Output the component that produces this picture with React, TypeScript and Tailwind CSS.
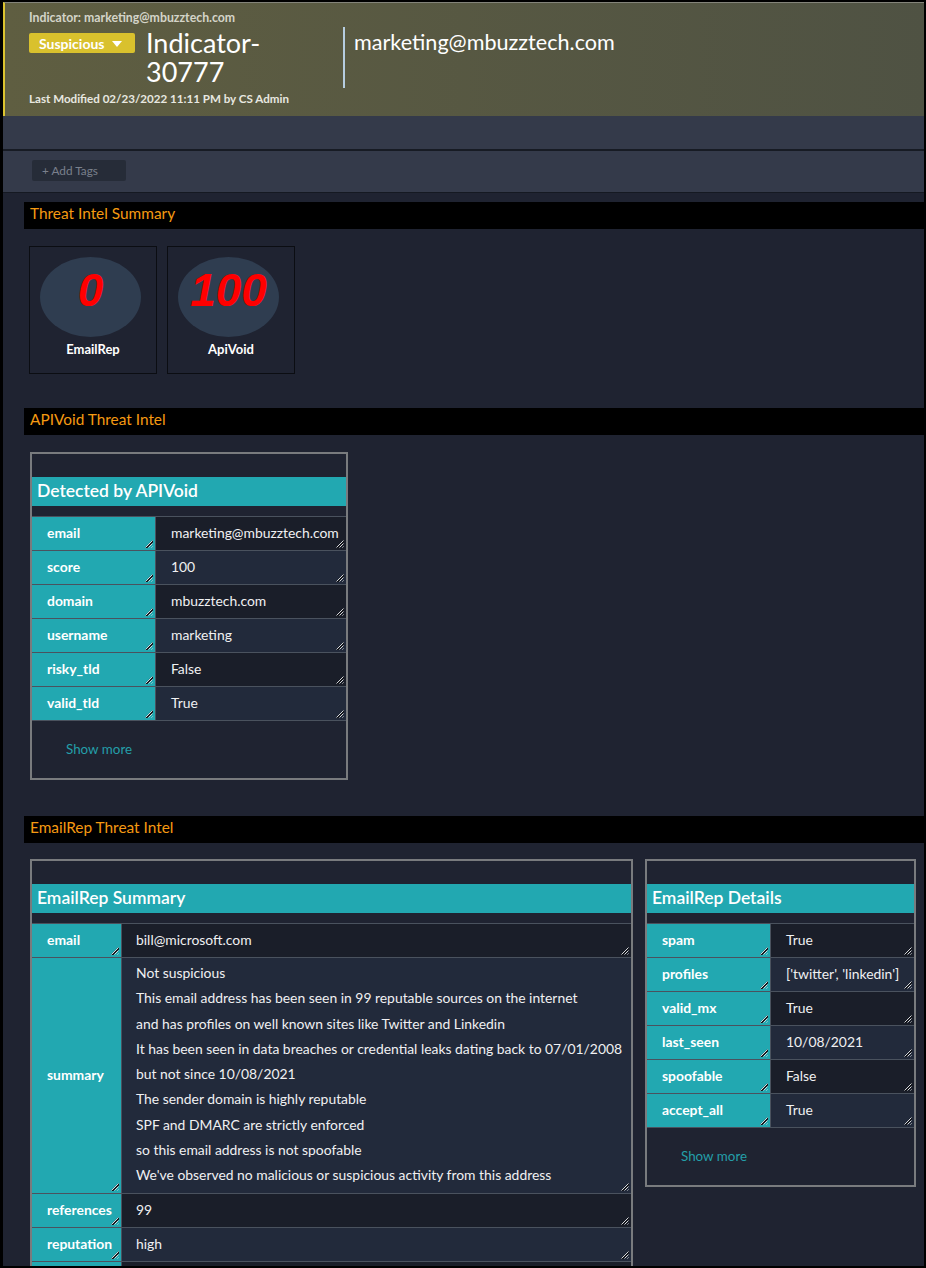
import React from "react";

const Handle = () => (
  <svg width="8" height="8" viewBox="0 0 8 8" className="absolute right-[2px] bottom-[2px]">
    <path d="M8 1 L1 8" stroke="#111318" strokeWidth="2" />
    <path d="M7.5 0.5 L0.5 7.5" stroke="#d6d8dc" strokeWidth="1" />
    <path d="M7.5 3.5 L3.5 7.5" stroke="#d6d8dc" strokeWidth="1" />
    <path d="M7.5 6.5 L6.5 7.5" stroke="#d6d8dc" strokeWidth="1" />
  </svg>
);

type RowProps = { k: string; v: string; dark: boolean; narrow?: boolean };

function Row({ k, v, dark, narrow }: RowProps) {
  return (
    <div className="flex border-b border-[#4a525e]">
      <div
        className={`relative flex items-center bg-[#22a8b1] border-r border-[#4a525e] font-bold text-[13.9px] text-white ${
          narrow ? "w-[90px] pl-[15px]" : "w-[124px] pl-[15px]"
        }`}
      >
        {k}
        <Handle />
      </div>
      <div
        className={`relative flex-1 h-[33px] flex items-center text-[13.9px] text-[#f0f0f2] whitespace-nowrap ${
          narrow ? "pl-[14px]" : "pl-[15px]"
        } ${dark ? "bg-[#1a1e29]" : "bg-[#222a3b]"}`}
      >
        {v}
        <Handle />
      </div>
    </div>
  );
}

function SectionBar({ title }: { title: string }) {
  return (
    <div className="h-[27px] bg-black flex items-center pl-[6px] pb-[3px] text-[15.4px] text-[#f59a12]">
      {title}
    </div>
  );
}

function ScoreCard({ n, label }: { n: string; label: string }) {
  return (
    <div className="w-[128px] h-[128px] border border-[#0b0d12] p-[10px] flex flex-col">
      <div className="w-[101px] h-[80px] rounded-[50%] bg-[#2f3d50] flex items-center justify-center">
        <span className="text-[#ff0000] italic font-bold text-[46px] leading-none font-['Liberation_Sans',sans-serif] -mt-[14px]">
          {n}
        </span>
      </div>
      <div className="self-center mt-[5px] text-[13px] font-bold text-white leading-[14px]">{label}</div>
    </div>
  );
}

function Panel({
  title,
  className,
  children,
}: {
  title: string;
  className: string;
  children: React.ReactNode;
}) {
  return (
    <div className={`border-2 border-[#797b7e] bg-[#1f2331] ${className}`}>
      <div className="h-[23px]" />
      <div className="h-[29px] bg-[#22a8b1] pl-[5px] flex items-center text-[17.5px] font-semibold text-white">
        {title}
      </div>
      <div className="h-[10px]" />
      <div className="border-t border-[#4a525e]">{children}</div>
    </div>
  );
}

function ShowMore() {
  return (
    <div className="h-[57px] pl-[34px] flex items-center text-[13.4px] text-[#249fa9]">Show more</div>
  );
}

const summaryLines = [
  "Not suspicious",
  "This email address has been seen in 99 reputable sources on the internet",
  "and has profiles on well known sites like Twitter and Linkedin",
  "It has been seen in data breaches or credential leaks dating back to 07/01/2008",
  "but not since 10/08/2021",
  "The sender domain is highly reputable",
  "SPF and DMARC are strictly enforced",
  "so this email address is not spoofable",
  "We've observed no malicious or suspicious activity from this address",
];

export default function App() {
  return (
    <div className="w-[926px] h-[1268px] overflow-hidden bg-[#1f2331] border-t-2 border-r-2 border-b-2 border-l-[3px] border-black font-['Lato',sans-serif]">
      {/* Header */}
      <div className="h-[114px] border-t border-[#84847a] border-l-2 border-l-[#dcc430] bg-gradient-to-r from-[#5f5e41] to-[#4f5243] pl-[24px] pt-[8px]">
        <div className="text-[12.3px] font-bold text-[#d4d4c8] leading-[14px]">
          Indicator: marketing@mbuzztech.com
        </div>
        <div className="flex items-start mt-[4px]">
          <div className="mt-[4px] w-[106px] h-[20px] bg-[#d9c12d] rounded-[2px] flex items-center pl-[10px] text-[14px] font-bold text-white">
            Suspicious
            <svg width="10" height="6" viewBox="0 0 10 6" className="ml-[7px] mt-[2px]">
              <path d="M0 0 L10 0 L5 6 Z" fill="#ffffff" />
            </svg>
          </div>
          <div className="ml-[11px] w-[197px] text-[27px] leading-[29px] text-white -mt-[1px]">
            Indicator-
            <br />
            30777
          </div>
          <div className="border-l-2 border-[#b6cde0] h-[61px] pl-[9px] text-[21.6px] text-white leading-[30px] -mt-[2px]">
            marketing@mbuzztech.com
          </div>
        </div>
        <div className="mt-[4px] text-[11.6px] font-bold text-[#e8e8e0] leading-[14px]">
          Last Modified 02/23/2022 11:11 PM by CS Admin
        </div>
      </div>

      {/* Bands */}
      <div className="h-[33px] bg-[#343a4a]" />
      <div className="h-[2px] bg-[#171b24]" />
      <div className="h-[41px] bg-[#343a4a] pl-[29px] pt-[9px]">
        <div className="w-[94px] h-[21px] bg-[#262c38] rounded-[2px] flex items-center pl-[10px] pt-[1px] text-[11.8px] text-[#7a808c]">
          + Add Tags
        </div>
      </div>
      <div className="h-[1px] bg-[#151922]" />

      {/* Main */}
      <div className="pl-[21px] pt-[9px]">
        <SectionBar title="Threat Intel Summary" />
        <div className="flex gap-[10px] pl-[5px] mt-[17px]">
          <ScoreCard n="0" label="EmailRep" />
          <ScoreCard n="100" label="ApiVoid" />
        </div>

        <div className="mt-[34px]">
          <SectionBar title="APIVoid Threat Intel" />
        </div>
        <div className="pl-[6px] mt-[17px]">
          <Panel title="Detected by APIVoid" className="w-[318px]">
            <Row k="email" v="marketing@mbuzztech.com" dark />
            <Row k="score" v="100" dark={false} />
            <Row k="domain" v="mbuzztech.com" dark />
            <Row k="username" v="marketing" dark={false} />
            <Row k="risky_tld" v="False" dark />
            <Row k="valid_tld" v="True" dark={false} />
            <ShowMore />
          </Panel>
        </div>

        <div className="mt-[36px]">
          <SectionBar title="EmailRep Threat Intel" />
        </div>
        <div className="pl-[6px] mt-[16px] flex items-start gap-[12px]">
          <Panel title="EmailRep Summary" className="w-[603px]">
            <Row k="email" v="bill@microsoft.com" dark narrow />
            <div className="flex border-b border-[#4a525e]">
              <div className="relative w-[90px] pl-[15px] flex items-center bg-[#22a8b1] border-r border-[#4a525e] font-bold text-[13.9px] text-white">
                summary
                <Handle />
              </div>
              <div className="relative flex-1 bg-[#222a3b] pl-[14px] pt-[2px] pb-[6px] text-[13.9px] leading-[25.25px] text-[#f0f0f2] whitespace-nowrap">
                {summaryLines.map((l) => (
                  <div key={l}>{l}</div>
                ))}
                <Handle />
              </div>
            </div>
            <Row k="references" v="99" dark narrow />
            <Row k="reputation" v="high" dark={false} narrow />
            <Row k="suspicious" v="False" dark narrow />
            <Row k="details" v="..." dark={false} narrow />
          </Panel>
          <Panel title="EmailRep Details" className="w-[271px]">
            <Row k="spam" v="True" dark />
            <Row k="profiles" v="['twitter', 'linkedin']" dark={false} />
            <Row k="valid_mx" v="True" dark />
            <Row k="last_seen" v="10/08/2021" dark={false} />
            <Row k="spoofable" v="False" dark />
            <Row k="accept_all" v="True" dark={false} />
            <ShowMore />
          </Panel>
        </div>
      </div>
    </div>
  );
}
